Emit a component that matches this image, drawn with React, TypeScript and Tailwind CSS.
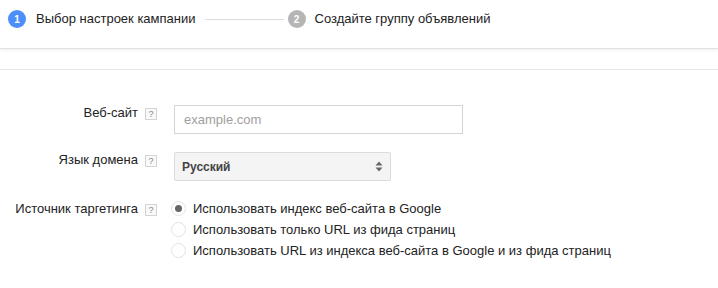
import React from "react";

const font = { fontFamily: '"Liberation Sans", Arial, sans-serif' };

function Help() {
  return (
    <span className="flex h-[12px] w-[12px] items-center justify-center border border-[#d4d4d4] bg-[#f9f9f9] text-[9px] leading-none text-[#888]">
      ?
    </span>
  );
}

function Radio({ checked, label }: { checked?: boolean; label: string }) {
  return (
    <div className="flex h-[21px] items-center">
      <span className="flex h-[15px] w-[15px] items-center justify-center rounded-full border border-[#e3e3e3] bg-white">
        {checked && <span className="h-[7px] w-[7px] rounded-full bg-[#666]" />}
      </span>
      <span className="ml-[7px] text-[13px] text-[#222]">{label}</span>
    </div>
  );
}

export default function App() {
  return (
    <div style={font} className="h-[288px] w-[718px] bg-white text-[#222]">
      <div className="flex h-[49px] items-center border-b border-[#e2e2e2] pl-[8px] pb-[10px] shadow-[0_1px_3px_rgba(0,0,0,0.08)]">
        <span className="flex h-[18px] w-[18px] items-center justify-center rounded-full bg-[#4d8ff8] text-[10px] font-bold text-white">
          1
        </span>
        <span className="ml-[10px] text-[13px]">Выбор настроек кампании</span>
        <span className="ml-[9px] h-px w-[79px] bg-[#dcdcdc]" />
        <span className="ml-[4px] flex h-[18px] w-[18px] items-center justify-center rounded-full bg-[#b5b5b5] text-[10px] font-bold text-white">
          2
        </span>
        <span className="ml-[9px] text-[13px]">Создайте группу объявлений</span>
      </div>
      <div className="mt-[20px] border-t border-[#e6e6e6]" />

      <div className="mt-[35px] flex flex-col">
        <div className="flex items-start">
          <span className="w-[138px] text-right text-[13px] leading-[16px]">Веб-сайт</span>
          <span className="ml-[7px] mt-[3px]">
            <Help />
          </span>
          <div className="ml-[17px] flex h-[29px] w-[289px] items-center border border-[#d5d5d5] pl-[9px] text-[13px] text-[#a0a0a0]">
            example.com
          </div>
        </div>

        <div className="mt-[18px] flex items-start">
          <span className="w-[138px] text-right text-[13px] leading-[16px]">Язык домена</span>
          <span className="ml-[7px] mt-[3px]">
            <Help />
          </span>
          <div className="ml-[17px] flex h-[29px] w-[217px] items-center justify-between rounded-[2px] border border-[#dcdcdc] bg-[#f4f4f4] pl-[7px] pr-[7px]">
            <span className="text-[12px] font-bold text-[#444]">Русский</span>
            <svg width="8" height="11" viewBox="0 0 8 11">
              <path d="M4 0.5 L7.5 4.5 L0.5 4.5 Z" fill="#666" />
              <path d="M4 10.5 L7.5 6.5 L0.5 6.5 Z" fill="#666" />
            </svg>
          </div>
        </div>

        <div className="mt-[17px] flex items-start">
          <span className="mt-[3px] w-[138px] text-right text-[13px] leading-[16px]">Источник таргетинга</span>
          <span className="ml-[7px] mt-[6px]">
            <Help />
          </span>
          <div className="ml-[14px] flex flex-col">
            <Radio checked label="Использовать индекс веб-сайта в Google" />
            <Radio label="Использовать только URL из фида страниц" />
            <Radio label="Использовать URL из индекса веб-сайта в Google и из фида страниц" />
          </div>
        </div>
      </div>
    </div>
  );
}
